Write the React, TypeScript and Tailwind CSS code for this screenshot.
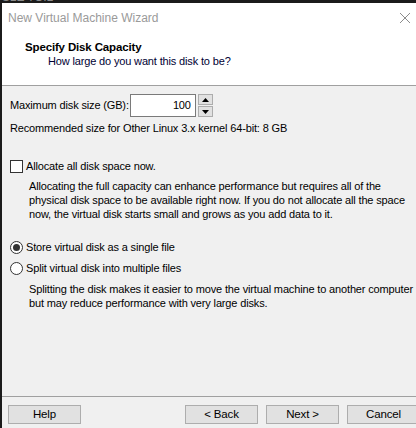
import React from "react";

const font = { fontFamily: '"Liberation Sans", Arial, sans-serif' };

function WinButton({ label, className = "" }: { label: string; className?: string }) {
  return (
    <button
      type="button"
      className={`h-[19px] w-[73px] shrink-0 border border-[#adadad] bg-[#e1e1e1] text-[11.5px] leading-[17px] text-black ${className}`}
    >
      {label}
    </button>
  );
}

function Radio({ checked }: { checked?: boolean }) {
  return (
    <span className="flex h-[13px] w-[13px] shrink-0 items-center justify-center rounded-full border border-[#333333] bg-white">
      {checked && <span className="h-[7px] w-[7px] rounded-full bg-[#333333]" />}
    </span>
  );
}

export default function App() {
  return (
    <div
      className="flex h-[428px] w-[416px] flex-col overflow-hidden whitespace-nowrap bg-[#1b1b1b] text-[11px] tracking-[-0.15px] text-black"
      style={font}
    >
      {/* strip of the window behind */}
      <div className="relative h-[3px] shrink-0 overflow-hidden">
        <span className="absolute left-[2px] top-[-9px] text-[12px] leading-[12px] text-[#8a8a8a]">SLE TOIL</span>
      </div>

      <div className="ml-[2px] flex flex-1 flex-col bg-[#f0f0f0]">
        {/* title bar + header */}
        <div className="flex h-[82px] shrink-0 flex-col bg-white">
          <div className="flex h-[30px] items-center justify-between pl-[6px] pr-[4px]">
            <span className="text-[12px] tracking-normal text-[#9a9a9a]">New Virtual Machine Wizard</span>
            <svg width="12" height="12" viewBox="0 0 12 12" className="mr-[1px]">
              <path d="M1 1 L11 11 M11 1 L1 11" stroke="#8c8c8c" strokeWidth="1" />
            </svg>
          </div>
          <div className="pl-[23px] pt-[7px] text-[11.5px] font-bold leading-[14px]">Specify Disk Capacity</div>
          <div className="pl-[46px] leading-[14px] text-[#000033]">How large do you want this disk to be?</div>
        </div>
        <div className="h-px shrink-0 bg-[#a0a0a0]" />

        {/* body */}
        <div className="flex flex-1 flex-col pl-[8px]">
          <div className="mt-[8px] flex items-center">
            <span>Maximum disk size (GB):</span>
            <div className="ml-[1px] flex h-[23px] w-[66px] items-center justify-end border border-[#7a7a7a] bg-white pr-[4px]">100</div>
            <div className="ml-[2px] flex h-[23px] w-[15px] flex-col justify-between">
              <span className="flex h-[11px] items-center justify-center border border-[#adadad] bg-[#e1e1e1]">
                <svg width="7" height="4" viewBox="0 0 7 4"><path d="M0 4 L3.5 0 L7 4 Z" fill="#000" /></svg>
              </span>
              <span className="flex h-[11px] items-center justify-center border border-[#adadad] bg-[#e1e1e1]">
                <svg width="7" height="4" viewBox="0 0 7 4"><path d="M0 0 L3.5 4 L7 0 Z" fill="#000" /></svg>
              </span>
            </div>
          </div>
          <div className="mt-[4px] leading-[14px]">Recommended size for Other Linux 3.x kernel 64-bit: 8 GB</div>

          <div className="mt-[24px] flex items-center gap-[3px]">
            <span className="h-[13px] w-[13px] shrink-0 border border-[#333333] bg-white" />
            <span className="leading-[14px]">Allocate all disk space now.</span>
          </div>
          <div className="mt-[6px] pl-[19px] leading-[14px]">
            Allocating the full capacity can enhance performance but requires all of the
            <br />
            physical disk space to be available right now. If you do not allocate all the space
            <br />
            now, the virtual disk starts small and grows as you add data to it.
          </div>

          <div className="mt-[19px] flex items-center gap-[3px]">
            <Radio checked />
            <span className="leading-[14px]">Store virtual disk as a single file</span>
          </div>
          <div className="mt-[7px] flex items-center gap-[3px]">
            <Radio />
            <span className="leading-[14px]">Split virtual disk into multiple files</span>
          </div>
          <div className="mt-[7px] pl-[19px] leading-[14px]">
            Splitting the disk makes it easier to move the virtual machine to another computer
            <br />
            but may reduce performance with very large disks.
          </div>
        </div>

        {/* footer */}
        <div className="h-px shrink-0 bg-[#a0a0a0]" />
        <div className="flex h-[31px] shrink-0 items-start pl-[6px] pt-[8px]">
          <WinButton label="Help" />
          <div className="ml-[104px] flex gap-[8px]">
            <WinButton label="< Back" />
            <WinButton label="Next >" />
            <WinButton label="Cancel" />
          </div>
        </div>
      </div>
    </div>
  );
}
